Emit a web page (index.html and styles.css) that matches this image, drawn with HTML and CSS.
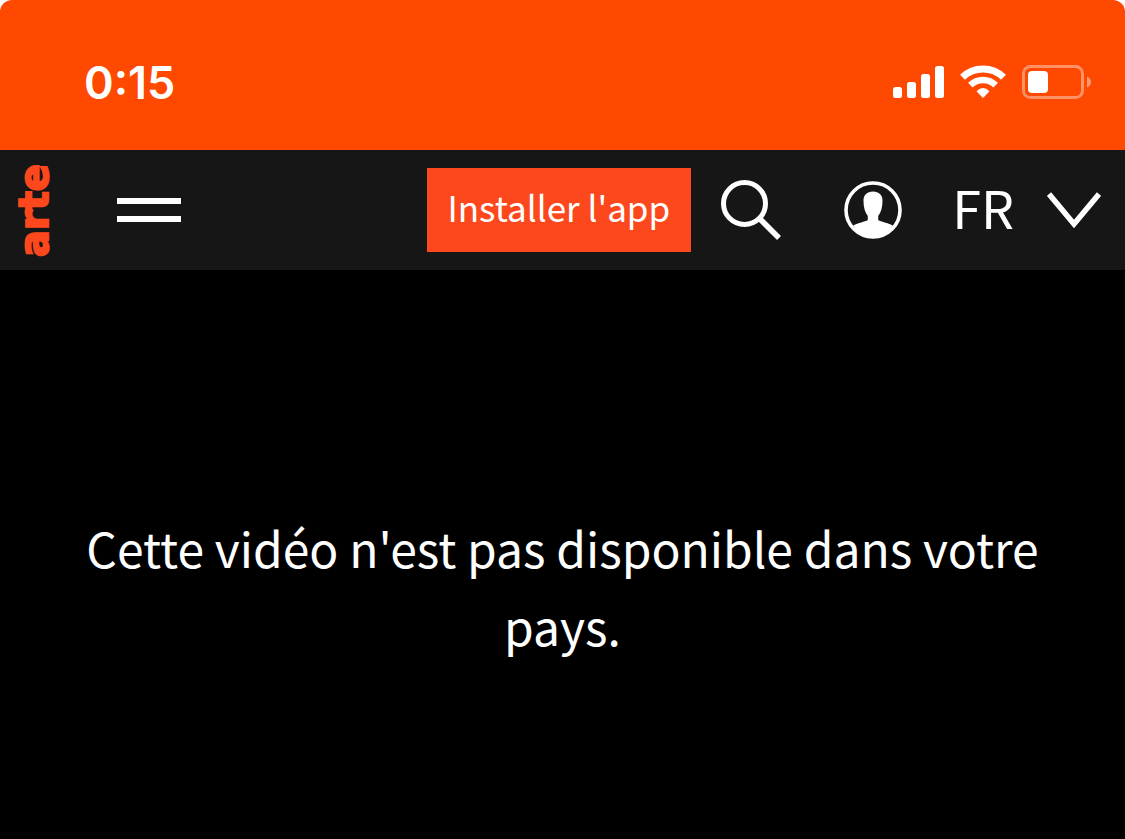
FILE: index.html
```
<!DOCTYPE html>
<html lang="fr">
  <head>
    <meta charset="UTF-8" />
    <meta name="viewport" content="width=device-width, initial-scale=1.0" />
    <title>ARTE</title>
    <link rel="stylesheet" href="styles.css">
  </head>
  <body>
    <div class="status-bar">
      <time class="clock">0:15</time>
      <div class="status-icons">
        <svg width="52" height="34" viewBox="0 0 52 34" fill="#fff" aria-hidden="true">
          <rect x="1" y="22" width="9" height="11" rx="2.5" />
          <rect x="15" y="17" width="9" height="16" rx="2.5" />
          <rect x="29" y="9" width="9" height="24" rx="2.5" />
          <rect x="43" y="1" width="9" height="32" rx="2.5" />
        </svg>
        <svg width="46" height="34" viewBox="0 0 46 34" fill="none" stroke="#fff" aria-hidden="true">
          <path d="M2.5 12.3a29.5 29.5 0 0 1 41 0" stroke-width="7" />
          <path d="M10.3 20.2a18.2 18.2 0 0 1 25.4 0" stroke-width="6.500" />
          <path d="M23 33l-6.500-6.800q6.500-6.500 13 0z" fill="#fff" stroke="none" />
        </svg>
        <svg width="70" height="34" viewBox="0 0 70 34" aria-hidden="true">
          <rect x="1.5" y="1.5" width="59" height="31" rx="7" fill="none" stroke="#fff" stroke-width="3" opacity=".4" />
          <rect x="6" y="6" width="20" height="22" rx="4" fill="#fff" />
          <path d="M65 11.5q4 2 4 5.500t-4 5.500z" fill="#fff" opacity=".45" />
        </svg>
      </div>
    </div>

    <header class="header">
      <a class="logo" href="/fr/">arte</a>
      <button class="icon-button" type="button" aria-label="Menu">
        <svg width="64" height="26" viewBox="0 0 64 26" fill="#fff">
          <rect y="1" width="64" height="6" />
          <rect y="19" width="64" height="6" />
        </svg>
      </button>
      <a class="install" href="/app">Installer l'app</a>
      <button class="icon-button search" type="button" aria-label="Rechercher">
        <svg width="60" height="60" viewBox="0 0 60 60" fill="none" stroke="#fff">
          <circle cx="23.500" cy="23.500" r="21" stroke-width="5" />
          <path d="M38 38l20 20" stroke-width="5.500" />
        </svg>
      </button>
      <button class="icon-button account" type="button" aria-label="Mon compte">
        <svg width="58" height="58" viewBox="0 0 58 58">
          <circle cx="29" cy="29" r="27" fill="none" stroke="#fff" stroke-width="3.600" />
          <path d="M29 10.500c-6 0-9.500 3.500-9.500 9 0 7 1.500 12 4.300 15.500v4c-3 2-9.500 2.500-14.500 5.500C14 52 21 56 29 56s15-4 19.700-11.500c-5-3-11.500-3.500-14.500-5.500v-4c2.800-3.500 4.300-8.500 4.300-15.500 0-5.500-3.500-9-9.500-9z" fill="#fff" />
        </svg>
      </button>
      <button class="icon-button language" type="button" aria-label="FR, changer de langue">
        <span class="language-code">FR</span>
        <svg width="54" height="36" viewBox="0 0 54 36" fill="none" stroke="#fff" stroke-width="5.500">
          <path d="M2 2l25 30L52 2" />
        </svg>
      </button>
    </header>

    <main class="player">
      <p class="message">Cette vidéo n'est pas disponible dans votre pays.</p>
    </main>
  </body>
</html>
```
FILE: styles.css
```
* {
  box-sizing: border-box;
}
html {
  background-color: #fff;
}
body {
  margin: 0;
  min-height: 100vh;
  display: flex;
  flex-direction: column;
  color: #fff;
  font-family: "Noto Sans CJK JP", "Noto Sans", sans-serif;
}
.status-bar {
  display: flex;
  align-items: center;
  justify-content: space-between;
  height: 150px;
  padding: 14px 33px 0 84px;
  background-color: #ff4800;
  border-radius: 12px 12px 0 0;
}
.clock {
  font-family: Inter, sans-serif;
  font-size: 45px;
  font-weight: 600;
}
.status-icons {
  display: flex;
  gap: 16px;
}
.header {
  display: flex;
  align-items: center;
  height: 120px;
  padding: 0 24px 0 12px;
  background-color: #161616;
}
.logo {
  width: 44px;
  margin-right: 61px;
  color: #fc481c;
  font-family: "DejaVu Sans", sans-serif;
  font-size: 40px;
  font-weight: bold;
  line-height: 44px;
  text-decoration: none;
  writing-mode: vertical-rl;
  transform: rotate(180deg);
  -webkit-text-stroke: 2px #fc481c;
}
.icon-button {
  display: flex;
  align-items: center;
  padding: 0;
  border: 0;
  background: none;
  color: inherit;
  font-family: inherit;
  cursor: pointer;
}
.install {
  margin-left: auto;
  padding: 0 21px 6px;
  background-color: #fc481c;
  color: #fff;
  font-size: 35px;
  line-height: 78px;
  text-decoration: none;
}
.search {
  margin-left: 30px;
}
.account {
  margin-left: 63px;
}
.language {
  gap: 33px;
  margin-left: 50px;
}
.language-code {
  padding-bottom: 6px;
  font-size: 52px;
  line-height: 78px;
}
.player {
  flex: 1;
  padding: 238px 72px 152px;
  background-color: #000;
}
.message {
  margin: 0;
  font-size: 48px;
  font-weight: 400;
  line-height: 78px;
  text-align: center;
}
```
